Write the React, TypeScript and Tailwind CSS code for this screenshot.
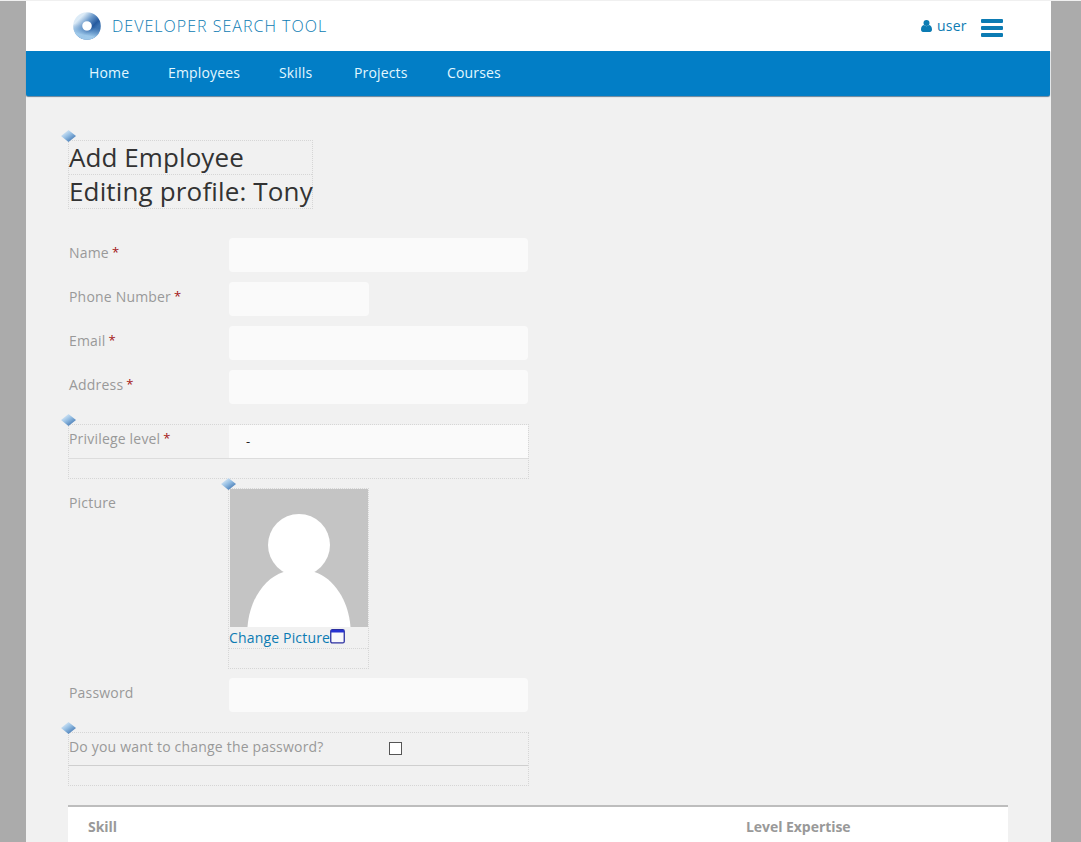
import React from "react";

function Diamond() {
  return (
    <svg className="absolute -left-[8px] -top-[11px] h-[12px] w-[15px]" viewBox="0 0 15 12">
      <defs>
        <linearGradient id="gem" x1="0.1" y1="0.1" x2="0.8" y2="0.9">
          <stop offset="0" stopColor="#e6f2fb" />
          <stop offset="0.5" stopColor="#92bce2" />
          <stop offset="1" stopColor="#4377b2" />
        </linearGradient>
      </defs>
      <path d="M7.5 0 L15 6 L7.5 12 L0 6 Z" fill="url(#gem)" />
    </svg>
  );
}

function Label({ text, required }: { text: string; required?: boolean }) {
  return (
    <div className="flex w-40 shrink-0 whitespace-nowrap pl-px pt-[5px] leading-5 tracking-[0.19px] text-[#999]">
      <span>{text}</span>
      {required && <span className="ml-[3px] text-[13px] leading-[18px] text-[#a31515]">*</span>}
    </div>
  );
}

function Field({ text, required, short }: { text: string; required?: boolean; short?: boolean }) {
  return (
    <div className="flex h-[34px]">
      <Label text={text} required={required} />
      <input
        className={
          short
            ? "ml-px h-[34px] w-[140px] rounded-[4px] bg-[#fafafa]"
            : "ml-px h-[34px] w-[299px] rounded-[4px] bg-[#fafafa]"
        }
      />
    </div>
  );
}

function Header() {
  return (
    <header className="flex h-[50px] items-start bg-white text-[#0c7bb3]">
      <svg className="ml-[47px] mt-[11px] h-7 w-7" viewBox="0 0 28 28">
        <defs>
          <linearGradient id="ringBase" x1="0.1" y1="0.1" x2="0.8" y2="0.8">
            <stop offset="0" stopColor="#dcebf7" />
            <stop offset="0.4" stopColor="#6e9bcb" />
            <stop offset="0.8" stopColor="#255a9f" />
            <stop offset="1" stopColor="#3d73b1" />
          </linearGradient>
          <linearGradient id="ringGlow" x1="0.5" y1="0.5" x2="0.4" y2="1">
            <stop offset="0" stopColor="#7cacd8" stopOpacity="0" />
            <stop offset="1" stopColor="#a9d2f0" stopOpacity="0.9" />
          </linearGradient>
        </defs>
        <circle cx="14" cy="14" r="9.3" fill="none" stroke="url(#ringBase)" strokeWidth="9" />
        <circle cx="14" cy="14" r="9.3" fill="none" stroke="url(#ringGlow)" strokeWidth="9" />
      </svg>
      <div className="ml-[11px] mt-[13px] whitespace-nowrap text-[16px] font-light leading-6 tracking-[1.02px]">
        DEVELOPER SEARCH TOOL
      </div>
      <div className="ml-auto mr-12 flex">
        <svg className="mt-[19px] h-3 w-[11px]" viewBox="0 0 11 12" fill="currentColor">
          <path d="M2.9 5.1C1.1 5.4 0 7.3 0 9.6C0 11.1 .8 12 2 12H9C10.2 12 11 11.1 11 9.6C11 7.3 9.9 5.4 8.1 5.1C7.4 5.8 6.5 6.2 5.5 6.2S3.6 5.8 2.9 5.1Z" />
          <circle cx="5.5" cy="3" r="3" />
        </svg>
        <span className="ml-[5px] mt-[15px] w-[30px] whitespace-nowrap text-[14px] leading-5 tracking-[0.2px]">user</span>
        <svg className="ml-[14px] mt-[18px] h-[18px] w-[22px]" viewBox="0 0 22 18" fill="currentColor">
          <rect width="22" height="4" rx="1" />
          <rect y="7" width="22" height="4" rx="1" />
          <rect y="14" width="22" height="4" rx="1" />
        </svg>
      </div>
    </header>
  );
}

function Nav() {
  return (
    <nav className="mr-px flex h-[45px] whitespace-nowrap rounded-b-[2px] bg-[#027ec6] pl-[63px] pt-[11px] text-[14px] leading-[22px] tracking-[0.15px] text-[#e2f8ff] shadow-[0_1px_1px_#64829a]">
      <a className="w-[79px]">Home</a>
      <a className="w-[111px]">Employees</a>
      <a className="w-[75px]">Skills</a>
      <a className="w-[93px]">Projects</a>
      <a>Courses</a>
    </nav>
  );
}

export default function App() {
  return (
    <div className="h-[842px] w-[1081px] overflow-hidden border-t border-[#f0f0f0] bg-[#ababab] font-['Open_Sans',sans-serif] text-[14px]">
      <div className="ml-[26px] h-full w-[1025px] bg-[#f1f1f1]">
        <Header />
        <Nav />
        <main className="pl-[42px] pt-11">
          <div className="relative h-[69px] w-[245px] whitespace-nowrap border border-dotted border-[#d6d6d6] text-[26px] text-[#333]">
            <Diamond />
            <h1 className="h-[34px] border-b border-dotted border-[#d6d6d6] leading-[32px] tracking-[0.08px]">Add Employee</h1>
            <h1 className="leading-[32px] tracking-[0.15px]">Editing profile: Tony</h1>
          </div>

          <div className="mt-[29px] flex flex-col gap-[10px]">
            <Field text="Name" required />
            <Field text="Phone Number" required short />
            <Field text="Email" required />
            <Field text="Address" required />
          </div>

          <div className="relative mt-5 h-[55px] w-[461px] border border-dotted border-[#d6d6d6]">
            <Diamond />
            <div className="-ml-px flex h-[34px] border-b border-[#dcdcdc]">
              <div className="-mt-px">
                <Label text="Privilege level" required />
              </div>
              <div className="ml-px flex-1 bg-[#fafafa] pl-[17px] pt-1.5 text-[13px] leading-[21px] text-[#222]">-</div>
            </div>
          </div>

          <div className="mt-[9px] flex h-[181px]">
            <Label text="Picture" />
            <div className="relative w-[141px] border border-dotted border-[#d6d6d6]">
              <svg className="ml-px h-[138px] w-[138px]" viewBox="0 0 138 138">
                <rect width="138" height="138" fill="#c4c4c4" />
                <circle cx="69" cy="56" r="31" fill="#fff" />
                <path d="M17.5 138C19.5 111 34.5 89 53.5 83H84.5C103.5 89 118.5 111 120.5 138Z" fill="#fff" />
              </svg>
              <Diamond />
              <div className="flex h-[22px] whitespace-nowrap border-b border-dotted border-[#d6d6d6] leading-[22px] tracking-[0.17px] text-[#0c7bb3]">
                <a>Change Picture</a>
                <svg className="mt-[2px] h-[15px] w-[15px] shrink-0" viewBox="0 0 15 15">
                  <rect x="0.75" y="0.75" width="13.5" height="13.2" rx="1.5" fill="#f8f8fc" stroke="#2a2fa0" strokeWidth="1.3" />
                  <path d="M1 1H14V3.5H1Z" fill="#2632d2" />
                </svg>
              </div>
            </div>
          </div>

          <div className="mt-[9px]">
            <Field text="Password" />
          </div>

          <div className="relative mt-5 h-[54px] w-[461px] border border-dotted border-[#d6d6d6]">
            <Diamond />
            <div className="-ml-px flex h-[33px] border-b border-[#cfcfcf]">
              <div className="-mt-px w-[321px]">
                <Label text="Do you want to change the password?" />
              </div>
              <span className="mt-[9px] h-[13px] w-[13px] border border-[#555] bg-white" />
            </div>
          </div>

          <div className="mt-[19px] flex h-[60px] w-[940px] whitespace-nowrap border-t-2 border-[#bdbdbd] bg-white pl-5 pt-[10px] font-bold leading-5 tracking-[-0.05px] text-[#999]">
            <div className="w-[658px]">Skill</div>
            <div>Level Expertise</div>
          </div>
        </main>
      </div>
    </div>
  );
}
